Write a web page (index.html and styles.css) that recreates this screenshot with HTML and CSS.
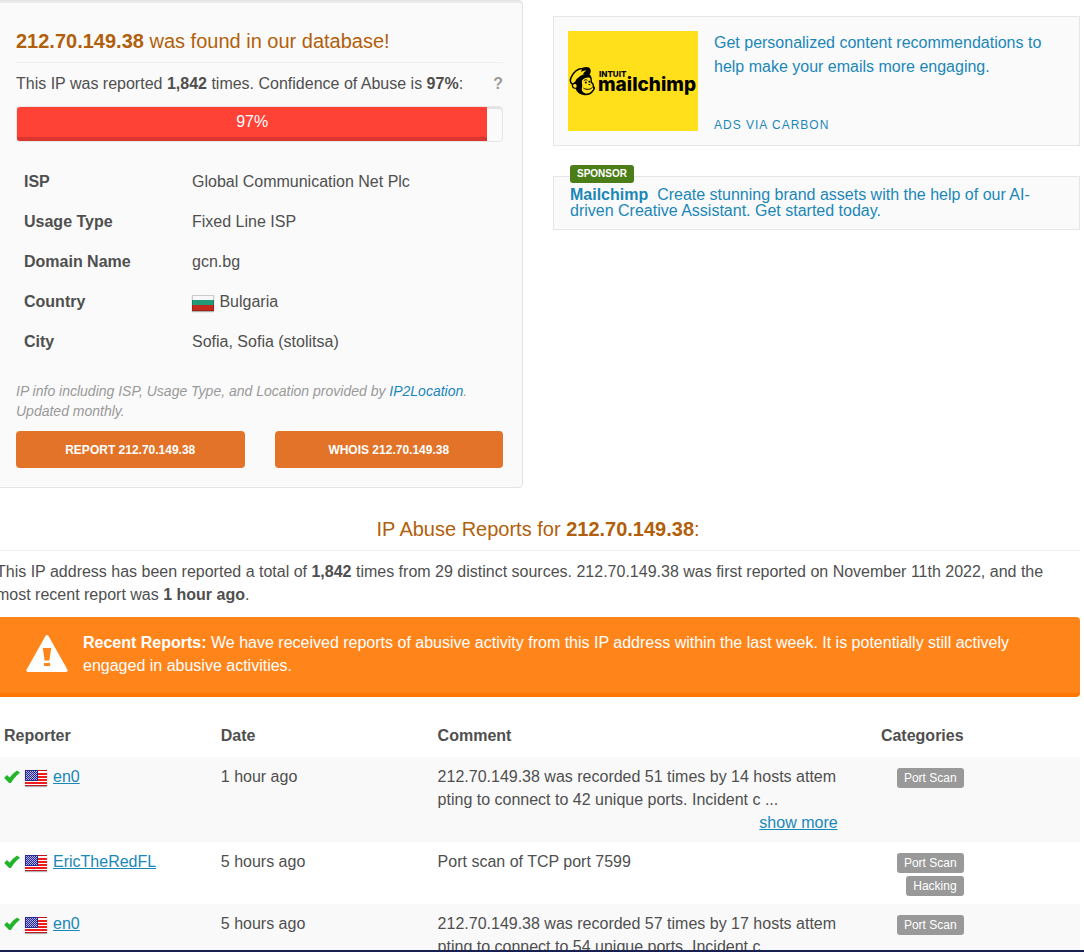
FILE: index.html
```
<!DOCTYPE html>
<html lang="en">
<head>
    <meta charset="UTF-8">
    <meta name="viewport" content="width=device-width, initial-scale=1.0">
    <title>212.70.149.38 | IP Abuse Reports</title>
    <link rel="stylesheet" href="styles.css">
</head>
<body>
    <!-- shared icons -->
    <svg class="sprite" aria-hidden="true">
        <symbol id="icon-check" viewBox="0 0 17 14">
            <path fill="#22b52c" d="M0.2 8 L3 5 L6.1 7.4 C8.3 4.4 11 1.8 14 0 L17 2.4 C13 5.4 9.8 9.2 7.4 13.4 L5.4 13.4 Z"/>
        </symbol>
        <symbol id="flag-us" viewBox="0 0 22 16">
            <rect width="22" height="16" fill="#fff"/>
            <path fill="#f01c1c" d="M13 3h9v2h-9zM13 6h9v2h-9zM13 9h9v2h-9zM0 12h22v2H0z"/>
            <path fill="#c4151b" d="M0 0h22v1H0zM0 15h22v1H0z"/>
            <rect width="13" height="11" fill="#2a2a96"/>
            <path stroke="#b9b9e6" stroke-width="1" stroke-dasharray="1 1" d="M1 1.5h11M1 3.5h11M1 5.5h11M1 7.5h11M1 9.5h11"/>
            <path stroke="#a4a4dc" stroke-width="1" stroke-dasharray="1 1" d="M2 2.5h10M2 4.5h10M2 6.5h10M2 8.5h10"/>
        </symbol>
    </svg>

    <main class="page">
        <div class="top">
            <section class="well">
                <h3><b>212.70.149.38</b> was found in our database!</h3>
                <p class="summary">
                    <span>This IP was reported <b>1,842</b> times. Confidence of Abuse is <b>97%</b>:</span>
                    <b class="help">?</b>
                </p>
                <div class="progress">
                    <div class="progress-bar" style="width: 97%">97%</div>
                </div>
                <table class="info">
                    <tr><th>ISP</th><td>Global Communication Net Plc</td></tr>
                    <tr><th>Usage Type</th><td>Fixed Line ISP</td></tr>
                    <tr><th>Domain Name</th><td>gcn.bg</td></tr>
                    <tr>
                        <th>Country</th>
                        <td>
                            <svg class="flag" viewBox="0 0 22 16" role="img" aria-label="Bulgaria flag">
                                <rect width="22" height="16" fill="#f8f8f8"/>
                                <rect y="5" width="22" height="6" fill="#239a78"/>
                                <rect y="10" width="22" height="6" fill="#c42a1c"/>
                                <path fill="none" stroke="#000" stroke-opacity=".18" d="M.5 .5h21v15H.5z"/>
                            </svg>
                            Bulgaria
                        </td>
                    </tr>
                    <tr><th>City</th><td>Sofia, Sofia (stolitsa)</td></tr>
                </table>
                <p class="note">IP info including ISP, Usage Type, and Location provided by <a href="#">IP2Location</a>. Updated monthly.</p>
                <div class="actions">
                    <button type="button">REPORT 212.70.149.38</button>
                    <button type="button">WHOIS 212.70.149.38</button>
                </div>
            </section>

            <aside class="ads">
                <div class="carbon">
                    <svg class="carbon-img" viewBox="0 0 130 100" role="img" aria-label="Intuit Mailchimp">
                        <rect width="130" height="100" fill="#ffe01b"/>
                        <!-- hair and head -->
                        <path d="M8 49.5 C10 45.5 14 43 20 43 C23.5 43.5 24 47.5 24 51 C25.5 52 26.2 53.5 26 55.5 C27.4 56 27.4 57.5 26.2 59 C24.5 62.8 21 64.6 16.5 64.3 C12 63.8 8.8 61.5 7.6 57.8 C4.8 57.8 3.2 56 4 53.5 C4.6 51.6 6.4 50.6 8 49.5 Z"/>
                        <!-- cap -->
                        <path fill="#ffe01b" stroke="#000" stroke-width="1.5" d="M4.4 53.5 C1.8 51.5 2 48.5 3.4 45.8 C5.8 41 10.2 37.4 14.5 37.4 C17.5 36.6 21 36.8 21.6 38.2 C22.4 40.5 21.5 42.6 20.5 43.6 C14.5 43.2 9.6 46.8 7.8 51 Z"/>
                        <path d="M14 38 C17 36.6 21.5 36.8 22 38.6 C22.4 40.4 22 42 21 43.4 C18.5 43 16.5 42.8 15 43.2 C15.8 41.5 17 40.4 18.5 39.6 C16.5 39.6 15 40 13 41 Z"/>
                        <!-- ear -->
                        <path fill="#ffe01b" d="M5 54.8 C5 52.6 8 52.2 8.6 54.2 L8.4 56.4 C6.6 57 5.2 56.4 5 54.8 Z"/>
                        <!-- face -->
                        <path fill="#ffe01b" d="M14 49.6 C15.8 47.2 19.5 45.8 22 47 C22.8 48.8 22.6 50.6 22.8 52 C24.4 52.8 25 54.2 24.6 56 C25.4 56.6 25.4 57.8 24.8 58.8 C23 61.8 19.8 63 17 62.2 C14 61 13.2 58.6 14 56.4 C14.8 54.4 13.4 52 14 49.6 Z"/>
                        <path fill="none" stroke="#000" d="M15.8 49.8 C17 48.4 18.6 48.6 19.4 49.4 M15.4 57 C18.4 59.2 22.4 58.6 24.6 56.2 M20.5 53.4 L22.4 53.8"/>
                        <circle cx="17.8" cy="51.6" r="1"/>
                        <circle cx="21.4" cy="50.8" r="1"/>
                        <text class="logo-small" x="31" y="46">INTUIT</text>
                        <text class="logo-text" x="30" y="60">mailchimp</text>
                    </svg>
                    <div class="carbon-body">
                        <a href="#">Get personalized content recommendations to help make your emails more engaging.</a>
                        <a class="carbon-via" href="#">ADS VIA CARBON</a>
                    </div>
                </div>
                <div class="sponsor">
                    <span class="sponsor-tag">SPONSOR</span>
                    <a href="#"><b>Mailchimp</b>&nbsp; Create stunning brand assets with the help of our AI-driven Creative Assistant. Get started today.</a>
                </div>
            </aside>
        </div>

        <section class="reports">
            <h3>IP Abuse Reports for <b>212.70.149.38</b>:</h3>
            <p class="intro">This IP address has been reported a total of <b>1,842</b> times from 29 distinct sources. 212.70.149.38 was first reported on November 11th 2022, and the most recent report was <b>1 hour ago</b>.</p>

            <div class="alert">
                <svg class="alert-icon" viewBox="0 0 42 37" aria-hidden="true">
                    <path fill="#fff" d="M19.6 .8 Q21 -.8 22.4 .8 L41.6 35 Q42 37 40 37 H2 Q0 37 .4 35 Z"/>
                    <path fill="#ff851b" d="M16.8 13h8.4l-1.8 12.5h-4.8zM18 28h6.2v3H18z"/>
                </svg>
                <p><b>Recent Reports:</b> We have received reports of abusive activity from this IP address within the last week. It is potentially still actively engaged in abusive activities.</p>
            </div>

            <table class="report-table">
                <colgroup>
                    <col class="col-reporter">
                    <col class="col-date">
                    <col>
                    <col class="col-categories">
                    <col class="col-actions">
                </colgroup>
                <thead>
                    <tr>
                        <th>Reporter</th>
                        <th>Date</th>
                        <th>Comment</th>
                        <th class="right">Categories</th>
                        <th></th>
                    </tr>
                </thead>
                <tbody>
                    <tr>
                        <td>
                            <div class="reporter">
                                <svg class="check"><use href="#icon-check"/></svg>
                                <svg class="flag"><use href="#flag-us"/></svg>
                                <a href="#">en0</a>
                            </div>
                        </td>
                        <td>1 hour ago</td>
                        <td class="comment">
                            212.70.149.38 was recorded 51 times by 14 hosts attempting to connect to 42 unique ports. Incident c ...
                            <a class="more" href="#">show more</a>
                        </td>
                        <td><div class="tags"><span>Port Scan</span></div></td>
                        <td></td>
                    </tr>
                    <tr>
                        <td>
                            <div class="reporter">
                                <svg class="check"><use href="#icon-check"/></svg>
                                <svg class="flag"><use href="#flag-us"/></svg>
                                <a href="#">EricTheRedFL</a>
                            </div>
                        </td>
                        <td>5 hours ago</td>
                        <td class="comment">Port scan of TCP port 7599</td>
                        <td><div class="tags"><span>Port Scan</span><span>Hacking</span></div></td>
                        <td></td>
                    </tr>
                    <tr>
                        <td>
                            <div class="reporter">
                                <svg class="check"><use href="#icon-check"/></svg>
                                <svg class="flag"><use href="#flag-us"/></svg>
                                <a href="#">en0</a>
                            </div>
                        </td>
                        <td>5 hours ago</td>
                        <td class="comment">
                            212.70.149.38 was recorded 57 times by 17 hosts attempting to connect to 54 unique ports. Incident c ...
                            <a class="more" href="#">show more</a>
                        </td>
                        <td><div class="tags"><span>Port Scan</span></div></td>
                        <td></td>
                    </tr>
                </tbody>
            </table>
        </section>
    </main>
    <footer class="bottom-bar"></footer>
</body>
</html>
```
FILE: styles.css
```
* {
    margin: 0;
    padding: 0;
    box-sizing: border-box;
}

body {
    display: flex;
    flex-direction: column;
    height: 100vh;
    overflow: hidden;
    background: #fff;
    color: #4f4f4f;
    font-family: "Liberation Sans", Arial, sans-serif;
    font-size: 16px;
    line-height: 23px;
}

a {
    color: #1a87b9;
    text-decoration: none;
}

.sprite {
    display: none;
}

.page {
    flex: 1;
    min-height: 0;
    margin: 0 4px 0 -4px;
    overflow: hidden;
}

.bottom-bar {
    height: 2px;
    background: #172050;
}

h3 {
    margin-bottom: 9px;
    padding: 7px 0;
    border-bottom: 1px solid #eee;
    color: #b25f0b;
    font-size: 20px;
    font-weight: normal;
    line-height: 28px;
}

.top {
    display: grid;
    grid-template-columns: 1fr 1fr;
    gap: 30px;
    align-items: start;
}

/* IP summary */
.well {
    padding: 19px;
    border: 1px solid #e4e4e4;
    border-radius: 4px;
    background: #fafafa;
    box-shadow: inset 0 2px 0 #ebebeb;
}

.summary {
    display: flex;
    justify-content: space-between;
    margin-bottom: 11px;
}

.help {
    color: #999;
}

.progress {
    height: 36px;
    margin-bottom: 19px;
    border: 1px solid #e6e6e6;
    border-radius: 4px;
    box-shadow: inset 0 2px 0 #e2e2e2;
    overflow: hidden;
}

.progress-bar {
    height: 100%;
    background: #ff4136;
    box-shadow: inset 0 -4px 0 #d9372e;
    color: #fff;
    line-height: 29px;
    text-align: center;
}

.info {
    width: 100%;
    margin-bottom: 20px;
    border-collapse: collapse;
    table-layout: fixed;
}

.info th {
    width: 168px;
    text-align: left;
}

.info th,
.info td {
    height: 40px;
    padding: 8px;
}

.flag {
    width: 22px;
    height: 16px;
    margin-right: 1px;
    box-shadow: 0 1px 1px rgba(0, 0, 0, 0.3);
}

.info .flag {
    vertical-align: -4px;
}

.note {
    margin-bottom: 10px;
    color: #999;
    font-size: 14px;
    font-style: italic;
    line-height: 20px;
}

.actions {
    display: grid;
    grid-template-columns: 1fr 1fr;
    gap: 30px;
}

.actions button {
    height: 37px;
    border: none;
    border-radius: 4px;
    background: #e37328;
    color: #fff;
    font-family: inherit;
    font-size: 12px;
    font-weight: bold;
    cursor: pointer;
}

/* ads */
.ads {
    padding-top: 16px;
}

.carbon {
    display: flex;
    gap: 16px;
    margin-bottom: 30px;
    padding: 14px;
    border: 1px solid #e6e6e6;
    background: #fafafa;
}

.carbon-img {
    flex: none;
    width: 130px;
    height: 100px;
}

.logo-small {
    font-family: Inter, sans-serif;
    font-size: 8px;
    font-weight: 800;
}

.logo-text {
    font-family: Inter, sans-serif;
    font-size: 19px;
    font-weight: 800;
}

.carbon-body {
    display: flex;
    flex-direction: column;
    justify-content: space-between;
    line-height: 24px;
}

.carbon-via {
    font-size: 12px;
    letter-spacing: 1px;
    line-height: 12px;
}

.sponsor {
    position: relative;
    padding: 10px 16px;
    border: 1px solid #e6e6e6;
    background: #fafafa;
    line-height: 16px;
}

.sponsor-tag {
    position: absolute;
    top: -12px;
    left: 16px;
    padding: 0 7px;
    border-radius: 3px;
    background: #4b7d18;
    color: #fff;
    font-size: 10px;
    font-weight: bold;
    line-height: 18px;
}

/* reports */
.reports {
    padding-top: 20px;
}

.reports h3 {
    text-align: center;
}

.intro {
    margin-bottom: 11px;
}

.alert {
    display: flex;
    gap: 15px;
    align-items: flex-start;
    min-height: 80px;
    margin-bottom: 19px;
    padding: 14px 30px;
    border-bottom: 4px solid #ff7701;
    border-radius: 4px;
    background: #ff851b;
    color: #fff;
}

.alert-icon {
    flex: none;
    width: 42px;
    height: 37px;
    margin-top: 4px;
}

.report-table {
    width: 100%;
    border-collapse: collapse;
    table-layout: fixed;
}

.col-reporter,
.col-date {
    width: 20%;
}

.col-categories {
    width: 126px;
}

.col-actions {
    width: 10%;
}

.report-table th {
    padding: 8px 8px 10px;
    text-align: left;
}

.report-table .right {
    text-align: right;
}

.report-table td {
    padding: 8px;
    vertical-align: top;
}

.report-table tbody tr:nth-child(odd) {
    background: #f9f9f9;
}

.report-table a {
    text-decoration: underline;
}

.reporter {
    display: flex;
    gap: 5px;
    align-items: center;
}

.reporter .flag {
    margin-top: 3px;
}

.check {
    width: 16px;
    height: 14px;
}

.comment {
    word-break: break-all;
}

.more {
    display: block;
    text-align: right;
}

.tags {
    display: flex;
    flex-direction: column;
    gap: 3px;
    align-items: flex-end;
    padding-top: 3px;
}

.tags span {
    padding: 0 7px;
    border-radius: 3px;
    background: #999;
    color: #fff;
    font-size: 12px;
    line-height: 20px;
}
```
